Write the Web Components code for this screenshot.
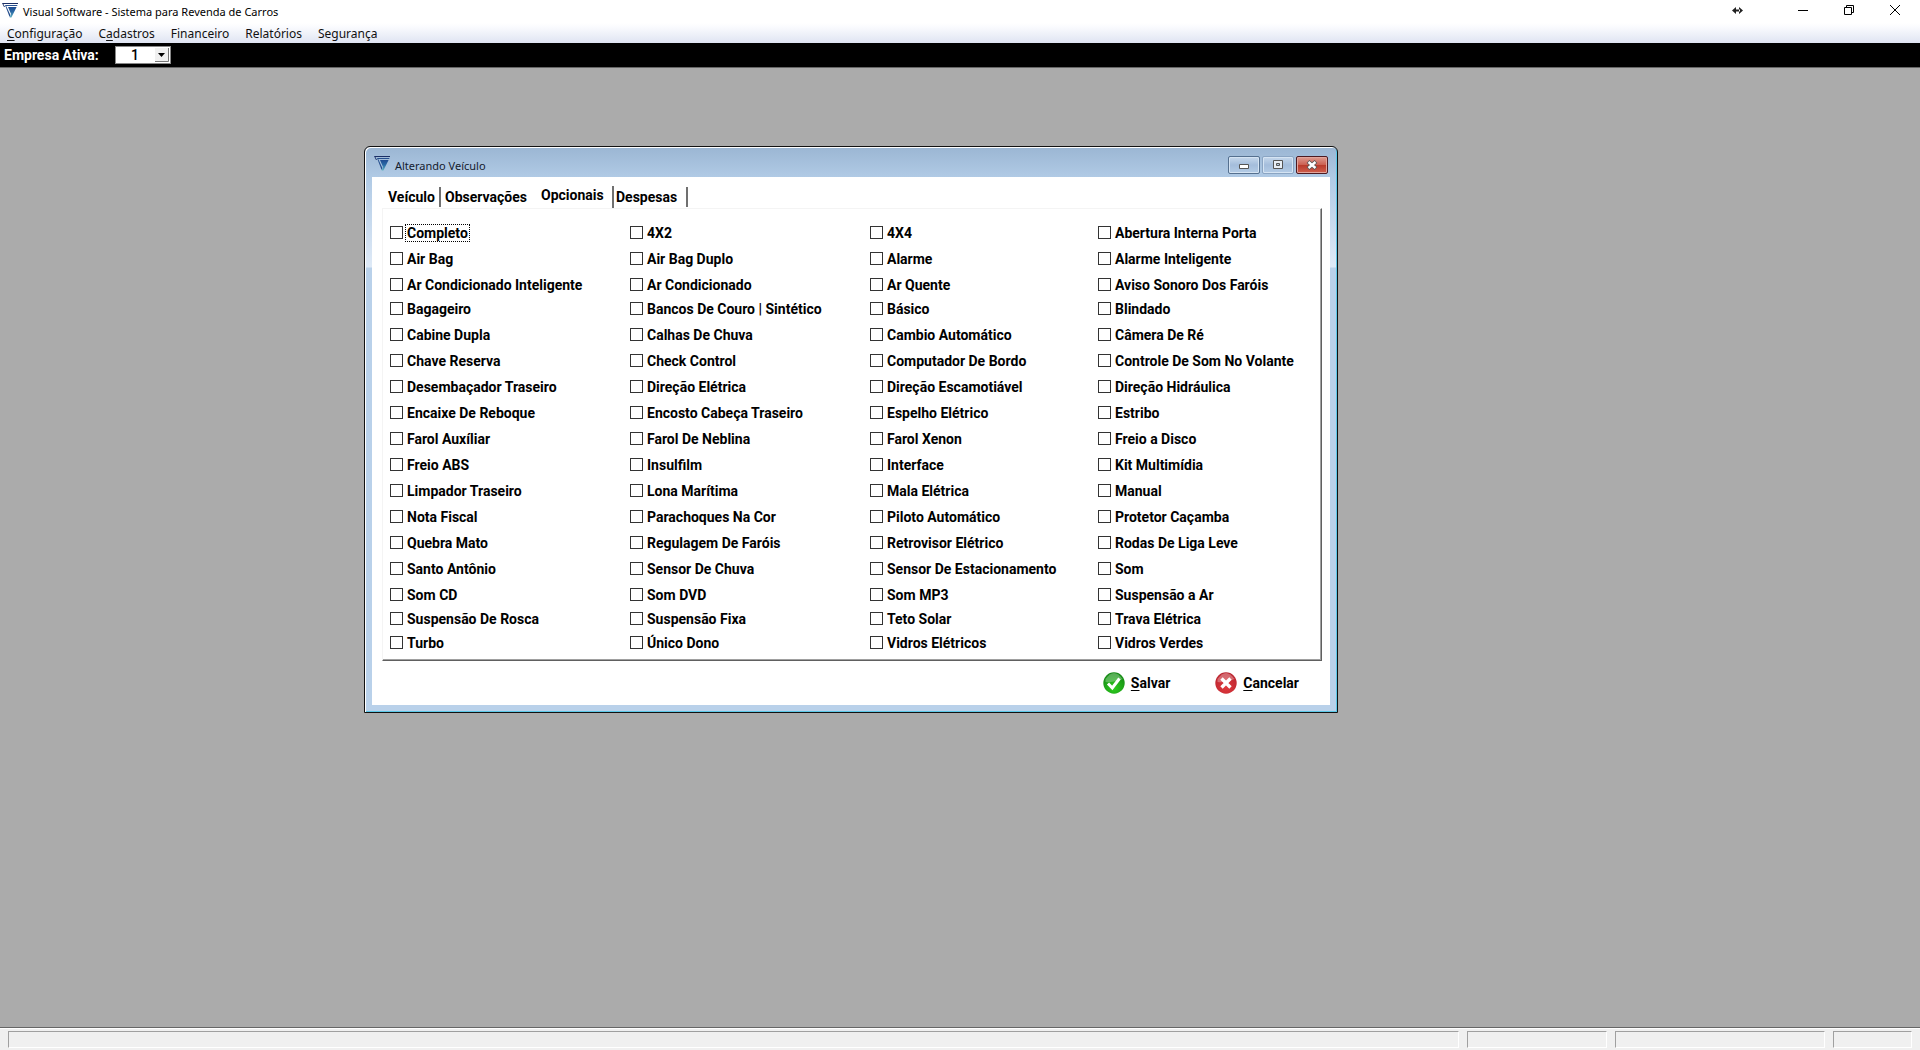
<!DOCTYPE html>
<html lang="pt-BR">
<head>
<meta charset="utf-8">
<title>Visual Software - Sistema para Revenda de Carros</title>
<style>
html,body{height:100%;margin:0}
body{--ui:"Roboto","Liberation Sans",Arial,sans-serif;--chrome:"Noto Sans","Open Sans",sans-serif;font-family:var(--ui);overflow:hidden}
</style>
</head>
<body>
<revenda-app></revenda-app>
<script>
const define=(name,html,setup)=>customElements.define(name,class extends HTMLElement{
  connectedCallback(){
    if(this.shadowRoot)return;
    const root=this.attachShadow({mode:'open'});
    const t=document.createElement('template');
    t.innerHTML='<style>*{box-sizing:border-box}</style>'+(typeof html==='function'?html(this):html);
    root.append(t.content.cloneNode(true));
    if(setup)setup(this,root);
  }
});

define('app-logo',`<style>:host{display:block;width:16px;height:15px}svg{display:block}</style>
<svg width="16" height="15" viewBox="0 0 16 15" aria-hidden="true">
<defs><linearGradient id="g" x1="0" y1="0" x2="0" y2="1"><stop offset="0" stop-color="#1f4a90"/><stop offset=".45" stop-color="#2a6aa6"/><stop offset="1" stop-color="#62b3c2"/></linearGradient></defs>
<path d="M0 0H16V1H1.4L3 4H2Z" fill="#1b2f66"/><path d="M3 2H15.6L15 3H4.2L8.4 12L7.6 14Z" fill="#27508f"/><path d="M6 4H14.6L9.4 14.6H7.6L9 11Z" fill="url(#g)"/></svg>`);

define('menu-bar',`<style>
:host{display:block;background:linear-gradient(#fff,#fafbfe 20%,#dfe4f2)}
nav{display:flex;height:20px;padding:1px 0 0 7px;gap:16px;align-items:flex-start}
a{color:#111;text-decoration:none;font:12px/19px var(--chrome)}
u{text-underline-offset:2px}
</style><nav aria-label="Menu"><a href="#"><u>C</u>onfiguração</a><a href="#">C<u>a</u>dastros</a><a href="#">Financeiro</a><a href="#">Relatórios</a><a href="#">Segurança</a></nav>`);

define('app-titlebar',`<style>
:host{display:flex;height:23px;background:#fff;align-items:flex-start;padding:0 2px}
app-logo{margin-top:3px}
h1{margin:0 auto 0 5px;font:11px/23px var(--chrome);color:#000}
button{border:0;background:none;padding:0;width:46px;height:20px;display:grid;place-items:center}
button:first-of-type{margin-right:20px}
svg{display:block}
</style><app-logo></app-logo><h1>Visual Software - Sistema para Revenda de Carros</h1>
<button aria-label="Redimensionar"><svg width="11" height="7" viewBox="0 0 11 7"><path d="M0 3.5L4 0V7ZM11 3.5L7 0V7ZM3 2.5H8V4.5H3Z" fill="#222"/></svg></button>
<button aria-label="Minimizar"><svg width="10" height="10"><path d="M0 5.5H10" stroke="#000"/></svg></button>
<button aria-label="Restaurar"><svg width="10" height="10" fill="none" stroke="#000"><path d="M.5 2.5H7.5V9.5H.5ZM2.5 2.5V.5H9.5V7.5H7.5"/></svg></button>
<button aria-label="Fechar"><svg width="10" height="10" stroke="#000"><path d="M0 0L10 10M10 0L0 10"/></svg></button>`);

define('company-bar',`<style>
:host{display:flex;height:25px;background:#000;border-bottom:1px solid #666;align-items:center;padding-left:4px}
label{color:#fff;font-weight:bold;font-size:14px;line-height:16px;width:111px}
.box{display:grid;width:56px;height:18px;border:1px solid #888;background:#fff}
.box>*{grid-area:1/1}
select{appearance:none;border:0;background:transparent;padding:0 0 0 15px;margin:0;font:500 14px/16px var(--ui);width:54px;height:16px;outline:0;color:#000}
svg{justify-self:end;display:block;pointer-events:none;margin-top:1px;margin-right:1px}
</style><label for="e">Empresa Ativa:</label><div class="box"><select id="e"><option>1</option></select>
<svg width="14" height="14"><path d="M0 0H14V14H0Z" fill="#f0f0f0"/><path d="M13.5 0V13.5H0" fill="none" stroke="#777"/><path d="M3 5H10L6.5 9Z"/></svg></div>`);

define('status-bar',`<style>
:host{display:flex;height:23px;background:#f0f0f0;border-top:1px solid #666;box-shadow:inset 0 1px #fff;padding:3px 8px 2px;gap:8px}
div{height:17px;border:1px solid;border-color:#a0a0a0 #fff #fff #a0a0a0}
.a{flex:1}.b{width:140px}.c{width:210px}.d{width:79px}
</style><div class="a"></div><div class="b"></div><div class="c"></div><div class="d"></div>`);

define('option-check',`<style>
:host{display:block}
label{display:flex;align-items:center;height:16px;width:max-content;font-weight:bold;font-size:14px;line-height:16px;color:#000;white-space:nowrap}
input{appearance:none;align-self:flex-start;margin:1px 2px 0 0;width:13px;height:13px;border:1px solid #333;background:#fff;outline:0;flex:none}
input:checked{background:#333}
span{padding:0 1px;border:1px dotted transparent}
:host([current]) span{border-color:#000}
</style><label><input type="checkbox"><span><slot></slot></span></label>`);

const options=['Completo','4X2','4X4','Abertura Interna Porta','Air Bag','Air Bag Duplo','Alarme','Alarme Inteligente','Ar Condicionado Inteligente','Ar Condicionado','Ar Quente','Aviso Sonoro Dos Faróis','Bagageiro','Bancos De Couro | Sintético','Básico','Blindado','Cabine Dupla','Calhas De Chuva','Cambio Automático','Câmera De Ré','Chave Reserva','Check Control','Computador De Bordo','Controle De Som No Volante','Desembaçador Traseiro','Direção Elétrica','Direção Escamotiável','Direção Hidráulica','Encaixe De Reboque','Encosto Cabeça Traseiro','Espelho Elétrico','Estribo','Farol Auxíliar','Farol De Neblina','Farol Xenon','Freio a Disco','Freio ABS','Insulfilm','Interface','Kit Multimídia','Limpador Traseiro','Lona Marítima','Mala Elétrica','Manual','Nota Fiscal','Parachoques Na Cor','Piloto Automático','Protetor Caçamba','Quebra Mato','Regulagem De Faróis','Retrovisor Elétrico','Rodas De Liga Leve','Santo Antônio','Sensor De Chuva','Sensor De Estacionamento','Som','Som CD','Som DVD','Som MP3','Suspensão a Ar','Suspensão De Rosca','Suspensão Fixa','Teto Solar','Trava Elétrica','Turbo','Único Dono','Vidros Elétricos','Vidros Verdes'];

define('options-panel',()=>`<style>
:host{box-sizing:border-box;display:grid;grid-template-columns:240fr 240fr 228fr 222fr;grid-template-rows:26px 26px 24px repeat(11,26px) 24px 24px 24px;padding:16px 1px 0 7px;border:1px solid #f4f4f4;border-right-color:#606060;border-bottom-color:#606060;box-shadow:inset -1px -1px #a0a0a0}
</style>${options.map((o,i)=>`<option-check${i?'':' current'}>${o}</option-check>`).join('')}`);

define('tab-strip',`<style>
:host{display:flex;height:22px}
button{border:0;border-right:2px solid #707070;background:#fff;padding:0 0 1px 3px;margin:1px 0;text-align:left;font:bold 14px/16px var(--ui);color:#000;white-space:nowrap}
.v{width:56px}.o{width:95px;border-color:transparent;padding-left:4px}
.p{width:78px;margin:0;padding:0 0 4px 5px}
.d{width:74px;padding-left:2px}
</style><button role="tab" class="v">Veículo</button><button role="tab" class="o">Observações</button><button role="tab" class="p" aria-selected="true">Opcionais</button><button role="tab" class="d">Despesas</button>`,
(host)=>{host.setAttribute('role','tablist');});

define('dialog-actions',`<style>
:host{display:flex;justify-content:flex-end;gap:45px;padding:11px 23px 0 0}
button{display:flex;align-items:center;gap:6px;border:0;padding:0;background:none;font:bold 14px/16px var(--ui);color:#000}
svg{display:block}u{text-underline-offset:2px}
</style><button><svg width="22" height="22" viewBox="0 0 22 22"><defs><radialGradient id="a" cx=".5" cy=".75" r=".7"><stop offset="0" stop-color="#2ccc1c"/><stop offset="1" stop-color="#168a16"/></radialGradient></defs><circle cx="11" cy="11" r="10.7" fill="url(#a)"/><path d="M2.5 7Q11-5 19.5 7Q11 11 2.5 10Z" fill="#fff" opacity=".28"/><path d="M5 11.5L9.3 16L16.5 6.5" fill="none" stroke="#fff" stroke-width="3"/></svg><span><u>S</u>alvar</span></button>
<button><svg width="22" height="22" viewBox="0 0 22 22"><defs><radialGradient id="b" cx=".5" cy=".7" r=".7"><stop offset="0" stop-color="#e0383c"/><stop offset="1" stop-color="#b92530"/></radialGradient></defs><circle cx="11" cy="11" r="10.7" fill="url(#b)"/><path d="M2.5 7Q11-5 19.5 7Q11 11 2.5 10Z" fill="#fff" opacity=".3"/><path d="M6.5 6.5L15.5 15.5M15.5 6.5L6.5 15.5" stroke="#fff" stroke-width="3.4"/></svg><span><u>C</u>ancelar</span></button>`);

define('vehicle-dialog',`<style>
:host{box-sizing:border-box;display:block;width:974px;border:1px solid #111;border-radius:6px 6px 0 0;background:linear-gradient(#9bb6d3,#b0cae5 30px,#dfeaf7 120px,#b9d1ea 121px);box-shadow:inset 1px 1px #fff,inset -1px -1px #5cc8e8;padding:0 7px 7px}
header{display:flex;height:30px;padding:9px 2px 0 2px;gap:2px}
h2{margin:0 auto 0 3px;font:11px/20px var(--chrome);color:#14202e}
header button{width:32px;height:18px;padding:0;border:1px solid #55708f;border-radius:2px;background:linear-gradient(#c6d8ec,#a4bddb 50%,#b4cce6);box-shadow:inset 0 0 0 1px #d5e4f3;display:grid;place-items:center}
header .max{border-color:#8ba5c3}
header .close{border-color:#4c1a22;background:linear-gradient(#dd9c92,#cc6152 48%,#b83a2b 50%,#cf5f4d);box-shadow:inset 0 0 0 1px #e3a59c}
svg{display:block}
main{background:#fff;padding:9px 8px 0 10px;height:528px}
tab-strip{margin-left:3px}
options-panel{height:453px}
</style><header><app-logo></app-logo><h2>Alterando Veículo</h2>
<button aria-label="Minimizar"><svg width="12" height="10"><path d="M1.5 4.5H10.5V8.5H1.5Z" fill="#fff" stroke="#555"/></svg></button>
<button class="max" aria-label="Maximizar"><svg width="12" height="10"><path d="M1.5 .5H10.5V8.5H1.5Z" fill="#e8eef5" stroke="#555"/><path d="M4.5 3.5H7.5V5.5H4.5Z" fill="#b3c8df" stroke="#555"/></svg></button>
<button class="close" aria-label="Fechar"><svg width="12" height="10" viewBox="0 0 12 10"><path d="M2 1.5L10 8.5M10 1.5L2 8.5" stroke="#555" stroke-width="4"/><path d="M2.5 2L9.5 8M9.5 2L2.5 8" stroke="#fff" stroke-width="2.4"/></svg></button></header>
<main><tab-strip></tab-strip><options-panel></options-panel><dialog-actions></dialog-actions></main>`);

define('revenda-app',`<style>
:host{display:flex;flex-direction:column;height:100vh}
section{flex:1;position:relative;background:#ababab;min-height:0}
vehicle-dialog{position:absolute;left:364px;top:78px}
</style><app-titlebar></app-titlebar><menu-bar></menu-bar><company-bar></company-bar><section><vehicle-dialog></vehicle-dialog></section><status-bar></status-bar>`);
</script>
</body>
</html>
